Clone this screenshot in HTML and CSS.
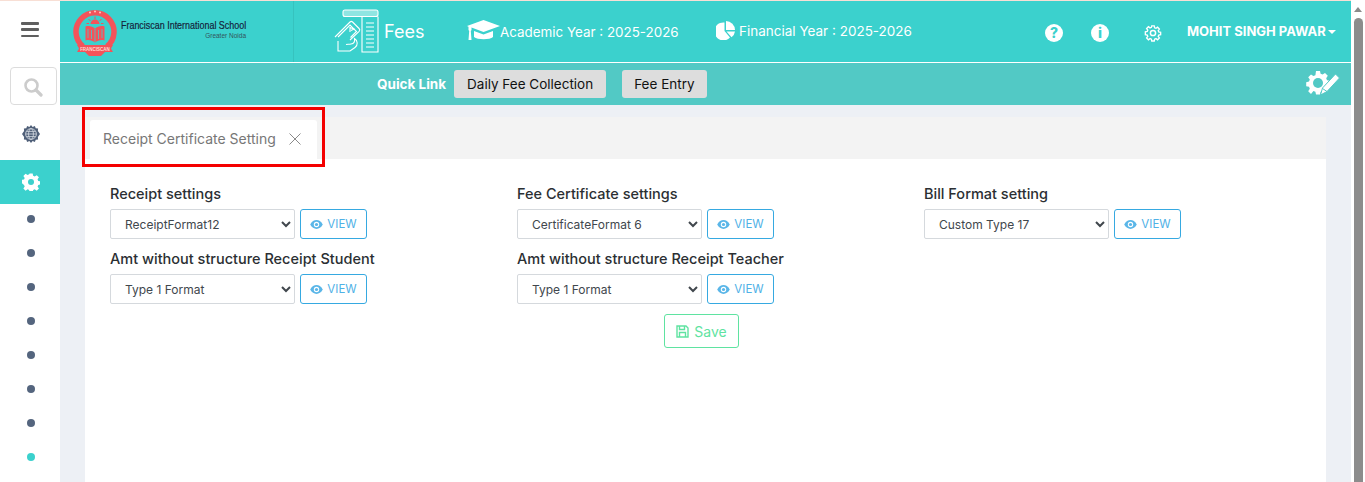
FILE: index.html
```html
<!DOCTYPE html>
<html lang="en">
<head>
<meta charset="utf-8">
<title>Receipt Certificate Setting</title>
<link rel="stylesheet" href="styles.css">
</head>
<body>
<div class="app">
  <div class="page">
    <div class="stripe"></div>
    <div class="frame">
      <aside class="sidebar">
        <button class="burger" aria-label="Menu"><span></span><span></span><span></span></button>
        <div class="search">
          <svg width="20" height="20" viewBox="0 0 20 20"><circle cx="8.5" cy="8.5" r="6" fill="none" stroke="#ccc" stroke-width="2.6"/><path d="M13 13l5 5" stroke="#ccc" stroke-width="3.2" stroke-linecap="round"/></svg>
        </div>
        <div class="side-item">
          <svg width="18" height="18" viewBox="0 0 18 18"><path d="M9 0l1.6 1.9 2.3-.9.8 2.3 2.4.3-.2 2.5L18 9l-2.1 2.9.2 2.5-2.4.3-.8 2.3-2.3-.9L9 18l-1.6-1.9-2.3.9-.8-2.3-2.4-.3.2-2.5L0 9l2.1-2.9-.2-2.5 2.4-.3.8-2.3 2.3.9z" fill="#4f5f78"/><circle cx="9" cy="9" r="5.4" fill="none" stroke="#d9dee6" stroke-width=".8"/><ellipse cx="9" cy="9" rx="2.4" ry="5.4" fill="none" stroke="#d9dee6" stroke-width=".8"/><path d="M3.6 9h10.8M4.4 6.4h9.2M4.4 11.6h9.2" stroke="#d9dee6" stroke-width=".8"/></svg>
        </div>
        <div class="side-item active">
          <svg width="18" height="18" viewBox="0 0 18 18"><path d="M7.400 0h3.200l.5 2.500 1.600.7 2.100-1.400 2.300 2.300-1.400 2.100.7 1.600 2.500.5v3.200l-2.500.5-.7 1.600 1.400 2.100-2.300 2.300-2.100-1.400-1.600.7-.5 2.500H7.400l-.5-2.500-1.600-.7-2.100 1.400-2.300-2.300 1.400-2.100-.7-1.600L-.9 10V6.800l2.500-.5.7-1.600L.9 2.600 3.200.3l2.100 1.400 1.600-.7z" fill="#fff" transform="translate(.5 .4) scale(.96)"/><circle cx="9" cy="9" r="3" fill="#3bd1cd"/></svg>
        </div>
        <ul class="dots">
          <li></li><li></li><li></li><li></li><li></li><li></li><li></li><li class="on"></li>
        </ul>
      </aside>
      <main class="main">
        <header class="topbar">
          <div class="brand">
            <svg class="logo" width="44" height="50" viewBox="0 0 44 50">
              <path d="M10 39.500A19 19 0 1 1 34 39.500" fill="none" stroke="#f4535a" stroke-width="5.500"/>
              <path d="M4 38h36l-2 3.500 2 3.500H4l2-3.500z" fill="#f4535a"/>
              <path d="M12 45h20l-4 4H16z" fill="#f4535a"/>
              <circle cx="17" cy="5.500" r=".9" fill="#ffd9d0"/><circle cx="22" cy="4.500" r=".9" fill="#ffd9d0"/><circle cx="27" cy="5.500" r=".9" fill="#ffd9d0"/>
              <path d="M17.500 17a4.500 4.500 0 0 1 9 0z" fill="#f4535a"/>
              <path d="M22 9.500v2.500M15.500 12l2 2M28.500 12l-2 2M13.500 16.500h2.500M28 16.500h2.500" stroke="#f4535a"/>
              <path d="M12.500 19.500c3.500-1 7 0 9.500 2v14c-2.500-2-6-3-9.500-2z" fill="#f4535a"/>
              <path d="M31.500 19.500c-3.500-1-7 0-9.500 2v14c2.500-2 6-3 9.500-2z" fill="#f4535a"/>
              <path d="M22 21.500v14M15 22v9M18.500 23v9M29 22v9M25.500 23v9" stroke="#3bd1cd" stroke-width=".8"/>
              <text x="22" y="43.500" class="logo-band" text-anchor="middle">FRANCISCAN</text>
            </svg>
            <div class="brand-text">
              <div class="brand-name">Franciscan International School</div>
              <div class="brand-sub">Greater Noida</div>
            </div>
          </div>
          <div class="module">
            <svg width="47" height="46" viewBox="0 0 47 46" fill="none" stroke="#fff" stroke-width="1.1">
              <rect x="10" y="1" width="35" height="6.5" rx="2" fill="#8fe5e2"/>
              <path d="M29 7.500V43h16V7.500"/>
              <path d="M33 14h8M33 18h8M33 22h8M33 26h8M33 30h8M33 34h8M33 38h8"/>
              <path d="M2 28l15-15a2 2 0 0 1 2.600 0l6.500 6.500a2 2 0 0 1 0 2.800L17 31M5 28l12-12 6.500 6.500-6 6"/>
              <path d="M17 23v-4.500l4 1.500-3 1.500"/>
              <path d="M5 32v10h12l5-3.500c3-2 3-7-.5-9 .5 3-.5 5-3.500 5.500-2 .5-3.500 0-5 .5"/>
            </svg>
            <span class="module-name">Fees</span>
          </div>
          <div class="year academic">
            <svg width="33" height="24" viewBox="0 0 33 24" fill="#fff"><path d="M16.500 0L33 6l-16.500 6L4.500 7.600V10L3.800 11l.7 9H1.500l.7-9-.7-1V6.800L0 6z"/><path d="M7 11l9.500 3.500L26 11v6c-3 3-15.500 3-19 0z"/></svg>
            <span>Academic Year : 2025-2026</span>
          </div>
          <div class="year financial">
            <svg width="19" height="19" viewBox="0 0 19 19" fill="#fff"><path d="M10 0a9 9 0 0 1 9 9h-9z"/><path d="M8.500 1.500V10l5.500 6.500A9 9 0 1 1 8.500 1.500z"/><path d="M10.500 10.500H19a9 9 0 0 1-3.500 5.800z"/></svg>
            <span>Financial Year : 2025-2026</span>
          </div>
          <div class="actions">
            <span class="round">?</span>
            <span class="round info">i</span>
            <svg class="cog" width="18" height="18" viewBox="0 0 18 18" fill="none" stroke="#fff" stroke-width="1.500"><path d="M7.600 1h2.800l.4 2.200 1.500.6 1.800-1.300 2 2-1.300 1.800.6 1.500 2.100.4v2.600l-2.100.4-.6 1.500 1.300 1.800-2 2-1.800-1.300-1.500.6-.4 2.100H7.600l-.4-2.100-1.500-.6-1.800 1.300-2-2 1.300-1.800-.6-1.500-2.100-.4V7.700l2.100-.4.6-1.500-1.300-1.800 2-2 1.800 1.300 1.500-.6z" transform="translate(.9 .9) scale(.9)"/><circle cx="9" cy="9" r="2.600"/></svg>
            <span class="user">MOHIT SINGH PAWAR<i class="caret"></i></span>
          </div>
        </header>
        <nav class="quickbar">
          <span class="quick-label">Quick Link</span>
          <a class="quick-btn first">Daily Fee Collection</a>
          <a class="quick-btn">Fee Entry</a>
          <svg class="quick-cog" width="34" height="26" viewBox="0 0 34 26"><path d="M10 1h4l.6 2.800 2 .8 2.400-1.600 2.800 2.800-1.600 2.400.8 2 2.800.6v4l-2.800.6-.8 2 1.600 2.400-2.800 2.800-2.400-1.600-2 .8-.6 2.800h-4l-.6-2.800-2-.8L5 24 2.200 21.200l1.600-2.400-.8-2L.2 16.200v-4l2.800-.6.8-2L2.200 7.200 5 4.400l2.400 1.600 2-.8z" fill="#fff" transform="translate(0 -1)"/><circle cx="12" cy="12" r="5" fill="#52c9c5"/><path d="M29.500 3l4 4L21 20.500l-6.500 3.500 2-7z" fill="#fff" stroke="#52c9c5" stroke-width="1"/><path d="M16.500 17.500l4.500 3" stroke="#52c9c5"/></svg>
        </nav>
        <section class="content">
          <div class="panel">
            <div class="tabs">
              <div class="tab">
                <span>Receipt Certificate Setting</span>
                <svg width="12" height="12" viewBox="0 0 12 12"><path d="M.5.500l11 11M11.500.500l-11 11" stroke="#8a8a8a" fill="none"/></svg>
              </div>
            </div>
            <div class="card">
              <div class="form-grid">
                <div class="field">
                  <label class="field-label">Receipt settings</label>
                  <div class="control">
                    <select class="picker"><option>ReceiptFormat12</option></select>
                    <button class="view"><svg class="eye" width="13" height="9" viewBox="0 0 14 10"><path d="M0 5c3.500-6.500 10.500-6.500 14 0-3.500 6.500-10.500 6.500-14 0z" fill="#5ab6e8"/><circle cx="7" cy="5" r="3" fill="#fff"/><circle cx="7" cy="5" r="1.800" fill="#5ab6e8"/></svg>VIEW</button>
                  </div>
                </div>
                <div class="field">
                  <label class="field-label">Fee Certificate settings</label>
                  <div class="control">
                    <select class="picker"><option>CertificateFormat 6</option></select>
                    <button class="view"><svg class="eye" width="13" height="9" viewBox="0 0 14 10"><path d="M0 5c3.500-6.500 10.500-6.500 14 0-3.500 6.500-10.500 6.500-14 0z" fill="#5ab6e8"/><circle cx="7" cy="5" r="3" fill="#fff"/><circle cx="7" cy="5" r="1.800" fill="#5ab6e8"/></svg>VIEW</button>
                  </div>
                </div>
                <div class="field">
                  <label class="field-label">Bill Format setting</label>
                  <div class="control">
                    <select class="picker"><option>Custom Type 17</option></select>
                    <button class="view"><svg class="eye" width="13" height="9" viewBox="0 0 14 10"><path d="M0 5c3.500-6.500 10.500-6.500 14 0-3.500 6.500-10.500 6.500-14 0z" fill="#5ab6e8"/><circle cx="7" cy="5" r="3" fill="#fff"/><circle cx="7" cy="5" r="1.800" fill="#5ab6e8"/></svg>VIEW</button>
                  </div>
                </div>
                <div class="field">
                  <label class="field-label">Amt without structure Receipt Student</label>
                  <div class="control">
                    <select class="picker"><option>Type 1 Format</option></select>
                    <button class="view"><svg class="eye" width="13" height="9" viewBox="0 0 14 10"><path d="M0 5c3.500-6.500 10.500-6.500 14 0-3.500 6.500-10.500 6.500-14 0z" fill="#5ab6e8"/><circle cx="7" cy="5" r="3" fill="#fff"/><circle cx="7" cy="5" r="1.800" fill="#5ab6e8"/></svg>VIEW</button>
                  </div>
                </div>
                <div class="field">
                  <label class="field-label">Amt without structure Receipt Teacher</label>
                  <div class="control">
                    <select class="picker"><option>Type 1 Format</option></select>
                    <button class="view"><svg class="eye" width="13" height="9" viewBox="0 0 14 10"><path d="M0 5c3.500-6.500 10.500-6.500 14 0-3.500 6.500-10.500 6.500-14 0z" fill="#5ab6e8"/><circle cx="7" cy="5" r="3" fill="#fff"/><circle cx="7" cy="5" r="1.800" fill="#5ab6e8"/></svg>VIEW</button>
                  </div>
                </div>
              </div>
              <div class="save-row">
                <button class="save"><svg width="13" height="13" viewBox="0 0 13 13" fill="none" stroke="#5fe3a1" stroke-width="1.400"><path d="M1 1h9l2 2v9H1z"/><path d="M3.500 1v3.500h5V1M3.500 12V7.500h6V12"/></svg>Save</button>
              </div>
            </div>
          </div>
        </section>
      </main>
    </div>
    <div class="highlight"></div>
  </div>
  <div class="scrollbar">
    <i class="scroll-up"></i>
    <i class="scroll-thumb"></i>
  </div>
</div>
</body>
</html>
```

FILE: styles.css
```css
* { box-sizing: border-box; }
html, body { margin: 0; height: 482px; overflow: hidden; }
body { font-family: Inter, "Noto Sans", sans-serif; color: #343a40; background: #fff; }
.app { display: flex; height: 482px; }
.page { position: relative; width: 1351px; height: 482px; overflow: hidden; display: flex; flex-direction: column; }
.stripe { height: 1px; background: #f8dfd5; flex: none; }
.frame { display: flex; flex: 1; min-height: 0; }

.scrollbar { width: 14px; background: #fff; display: flex; flex-direction: column; align-items: center; }
.scroll-up { margin-top: 7px; width: 0; height: 0; border-left: 4.500px solid transparent; border-right: 4.500px solid transparent; border-bottom: 5px solid #8a8a8a; }
.scroll-thumb { margin-top: 6px; width: 9px; flex: 1; background: #8c8c8c; border-radius: 5px 5px 0 0; }

.sidebar { width: 60px; flex: none; background: #fff; display: flex; flex-direction: column; align-items: center; }
.burger { margin-top: 21px; width: 18px; height: 15px; padding: 0; border: 0; background: none; display: flex; flex-direction: column; justify-content: space-between; }
.burger span { display: block; height: 2.500px; background: #5f5f5f; border-radius: 1px; }
.search { margin: 30px 0 0 7px; width: 47px; height: 38px; border: 1px solid #dcdcdc; border-radius: 4px; display: flex; align-items: center; justify-content: center; }
.search svg { margin: 1px 2px 0 0; }
.side-item { width: 100%; height: 44px; padding-left: 2px; display: flex; align-items: center; justify-content: center; }
.search + .side-item { margin-top: 7px; margin-bottom: 4px; }
.side-item.active { background: #3bd1cd; }
.dots { list-style: none; margin: 0 0 0 1px; padding: 11px 0 0; display: flex; flex-direction: column; gap: 26px; align-items: center; }
.dots li { width: 8px; height: 8px; border-radius: 50%; background: #54657e; }
.dots li.on { background: #3bd1cd; }

.main { flex: 1; min-width: 0; display: flex; flex-direction: column; background: #edf0f5; }
.topbar { height: 61px; flex: none; background: #3bd1cd; display: flex; align-items: center; color: #fff; }
.brand { width: 234px; height: 100%; flex: none; display: flex; align-items: center; padding-left: 13px; border-right: 1px solid #36c2be; }
.logo { flex: none; }
.logo-band { font-family: "Liberation Sans", sans-serif; font-size: 4.500px; font-weight: 700; fill: #ffd9d0; }
.brand-text { margin-left: 4px; margin-top: -5px; color: #15233a; width: 125px; }
.brand-name { font-family: "Liberation Sans", sans-serif; font-size: 11.500px; line-height: 13px; white-space: nowrap; transform: scaleX(.777); transform-origin: left center; -webkit-text-stroke: .2px #15233a; }
.brand-sub { font-family: "Liberation Sans", sans-serif; font-size: 6.500px; line-height: 7px; text-align: right; color: #33545c; white-space: nowrap; }
.module { margin-left: 39px; width: 134px; display: flex; align-items: center; }
.module-name { margin-left: 4px; font-size: 18px; }
.year { display: flex; align-items: center; white-space: nowrap; }
.academic { width: 249px; font-size: 13.400px; }
.financial { margin-top: -2px; font-size: 13.500px; }
.financial span { margin-left: 4px; }
.actions { margin-left: 133px; display: flex; align-items: center; }
.round { width: 18px; height: 18px; border-radius: 50%; background: #fff; color: #3bd1cd; font-weight: 800; font-size: 14px; line-height: 18px; text-align: center; margin-top: 3px; }
.round.info { margin-left: 28px; }
.cog { margin-left: 35px; margin-top: 3px; }
.user { margin-left: 25px; font-size: 13px; font-weight: 700; white-space: nowrap; margin-top: -2px; }
.caret { display: inline-block; margin-left: 2px; vertical-align: 2px; border-left: 4px solid transparent; border-right: 4px solid transparent; border-top: 4px solid #fff; }

.quickbar { height: 42px; flex: none; margin-top: 1px; background: #52c9c5; display: flex; align-items: center; box-shadow: 0 -1px 0 #fff; }
.quick-label { margin-left: 317px; font-size: 13.500px; font-weight: 700; color: #fff; }
.quick-btn { height: 28px; padding: 0 12px; background: #ddd; border-radius: 3px; color: #111; font-size: 13.500px; line-height: 28px; white-space: nowrap; margin-left: 16px; }
.quick-btn.first { margin-left: 8px; padding: 0 13px; }
.quick-cog { margin-left: auto; margin-right: 11px; }

.content { flex: 1; min-height: 0; padding: 12px 25px 0; }
.panel { height: 100%; display: flex; flex-direction: column; }
.tabs { height: 42px; flex: none; background: #f3f3f3; padding: 3px 0 0 5px; }
.tab { width: 227px; height: 39px; padding: 0 13px 2px; background: #fff; border-radius: 3px 3px 0 0; display: flex; align-items: center; justify-content: space-between; color: #777; font-size: 14px; white-space: nowrap; }
.tab svg { margin-right: 3px; }
.card { flex: 1; background: #fff; padding: 26px 25px 0; }
.form-grid { display: grid; grid-template-columns: repeat(3, 407px); row-gap: 11px; }
.field-label { display: block; font-size: 14.500px; font-weight: 500; line-height: 17px; color: #2b2f33; margin-bottom: 7px; white-space: nowrap; }
.control { display: flex; align-items: center; gap: 5px; }
.picker { width: 185px; height: 30px; padding: 0 0 0 10px; border: 1px solid #d5d9dd; border-radius: 2px; background: #fff; color: #41474d; font: 12px Inter, "Noto Sans", sans-serif; }
.view { width: 67px; height: 30px; padding: 0; border: 1px solid #36a9e1; border-radius: 3px; background: #fff; color: #4fb1e6; font: 11.500px Inter, "Noto Sans", sans-serif; display: flex; align-items: center; justify-content: center; gap: 4px; }
.save-row { display: flex; padding-left: 554px; margin-top: 10px; }
.save { width: 75px; height: 34px; padding: 0; border: 1px solid #5fe3a1; border-radius: 3px; background: #fff; color: #5fe3a1; font: 14px Inter, "Noto Sans", sans-serif; display: flex; align-items: center; justify-content: center; gap: 5px; }

.highlight { position: absolute; left: 82px; top: 107px; width: 243px; height: 60px; border: 3px solid #f40000; pointer-events: none; }
```
